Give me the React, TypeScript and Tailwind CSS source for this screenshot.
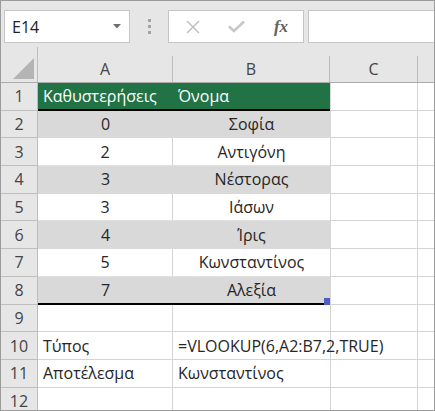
import React from 'react';

const font = { fontFamily: '"Open Sans", "Noto Sans", sans-serif' };

type Row = {
  n: number;
  a?: string;
  b?: string;
  kind: 'head' | 'gray' | 'white' | 'plain';
};

const rows: Row[] = [
  { n: 1, a: 'Καθυστερήσεις', b: 'Όνομα', kind: 'head' },
  { n: 2, a: '0', b: 'Σοφία', kind: 'gray' },
  { n: 3, a: '2', b: 'Αντιγόνη', kind: 'white' },
  { n: 4, a: '3', b: 'Νέστορας', kind: 'gray' },
  { n: 5, a: '3', b: 'Ιάσων', kind: 'white' },
  { n: 6, a: '4', b: 'Ίρις', kind: 'gray' },
  { n: 7, a: '5', b: 'Κωνσταντίνος', kind: 'white' },
  { n: 8, a: '7', b: 'Αλεξία', kind: 'gray' },
  { n: 9, kind: 'plain' },
  { n: 10, a: 'Τύπος', b: '=VLOOKUP(6,A2:B7,2,TRUE)', kind: 'plain' },
  { n: 11, a: 'Αποτέλεσμα', b: 'Κωνσταντίνος', kind: 'plain' },
  { n: 12, kind: 'plain' },
];

function DataRow({ r }: { r: Row }) {
  const rowH = 'h-[27.7px] shrink-0';
  let ab: React.ReactNode;
  if (r.kind === 'head') {
    ab = (
      <div className="flex w-[292px] bg-[#217346] text-white border-b-2 border-black">
        <div className="w-[135px] pl-[5px] flex items-center whitespace-nowrap">{r.a}</div>
        <div className="w-[157px] pl-[5px] flex items-center">{r.b}</div>
      </div>
    );
  } else if (r.kind === 'gray') {
    ab = (
      <div
        className={
          'relative flex w-[292px] bg-[#d9d9d9] text-[#262626] ' +
          (r.n === 8 ? 'border-b-2 border-black' : 'border-b border-[#d9d9d9]')
        }
      >
        <div className="w-[135px] flex items-center justify-center">{r.a}</div>
        <div className="w-[157px] flex items-center justify-center">{r.b}</div>
        {r.n === 8 && (
          <div className="absolute right-0 -bottom-[2px] w-[6px] h-[7px] bg-[#4a5ec3]" />
        )}
      </div>
    );
  } else if (r.kind === 'white') {
    ab = (
      <div className="flex w-[292px] bg-white text-[#262626] border-b border-[#e1e1e1]">
        <div className="w-[135px] flex items-center justify-center border-r border-[#d4d4d4]">{r.a}</div>
        <div className="w-[157px] flex items-center justify-center">{r.b}</div>
      </div>
    );
  } else {
    ab = (
      <div className="flex w-[292px] bg-white text-[#262626]">
        <div className="w-[135px] pl-[5px] flex items-center border-r border-b border-[#d4d4d4] whitespace-nowrap">
          {r.a}
        </div>
        <div className="w-[157px] pl-[5px] flex items-center border-b border-[#d4d4d4] whitespace-nowrap">
          <span className="relative z-10">{r.b}</span>
        </div>
      </div>
    );
  }
  return (
    <div className={'flex ' + rowH}>
      <div className="w-[37px] shrink-0 bg-[#e6e6e6] border-r border-b border-[#bdbdbd] flex items-center justify-center text-[#444]">
        {r.n}
      </div>
      {ab}
      <div className="w-[88px] shrink-0 bg-white border-l border-r border-b border-[#d4d4d4]" />
      <div className="flex-1 bg-white border-b border-[#d4d4d4]" />
    </div>
  );
}

export default function App() {
  return (
    <div
      className="w-[435px] h-[411px] bg-[#e6e6e6] border border-[#9b9b9b] overflow-hidden flex flex-col text-[16px] leading-none"
      style={font}
    >
      {/* formula bar */}
      <div className="flex items-start pt-[9px] pl-[3px] h-[55px] shrink-0">
        <div className="w-[126px] h-[33px] bg-white border border-[#c6c6c6] flex items-center justify-between pl-[7px] pr-[8px] text-[#222]">
          <span className="text-[16px]">E14</span>
          <svg width="8" height="5" viewBox="0 0 8 5">
            <path d="M0 0 L8 0 L4 4.5 Z" fill="#6e6e6e" />
          </svg>
        </div>
        <div className="w-[38px] h-[33px] flex flex-col items-center justify-center gap-[3px]">
          <div className="w-[3px] h-[3px] bg-[#a3a3a3]" />
          <div className="w-[3px] h-[3px] bg-[#a3a3a3]" />
          <div className="w-[3px] h-[3px] bg-[#a3a3a3]" />
        </div>
        <div className="w-[136px] h-[33px] bg-white border border-[#c6c6c6] flex items-center">
          <div className="w-[45px] flex justify-center pl-[2px]">
            <svg width="14" height="14" viewBox="0 0 14 14">
              <path d="M1 1 L13 13 M13 1 L1 13" stroke="#c2c2c2" strokeWidth="1.6" />
            </svg>
          </div>
          <div className="w-[45px] flex justify-center">
            <svg width="17" height="13" viewBox="0 0 17 13">
              <path d="M1 6.5 L6 11 L16 1.5" stroke="#c8c8c8" strokeWidth="2.6" fill="none" />
            </svg>
          </div>
          <div
            className="w-[44px] flex justify-center text-[#5f5f5f] italic text-[17px] font-bold"
            style={{ fontFamily: '"Liberation Serif", "DejaVu Serif", serif' }}
          >
            fx
          </div>
        </div>
        <div className="flex-1 h-[33px] ml-[4px] bg-white border border-[#c6c6c6] border-r-0" />
      </div>

      {/* column headers */}
      <div className="flex h-[27px] shrink-0 border-b border-[#ababab] text-[#444]">
        <div className="w-[37px] shrink-0 border-r border-[#bdbdbd] -mt-[9px] flex items-end justify-end pr-[3px] pb-[3px]">
          <svg width="21" height="21" viewBox="0 0 21 21">
            <path d="M21 0 L21 21 L0 21 Z" fill="#b4b4b4" />
          </svg>
        </div>
        <div className="w-[135px] shrink-0 border-r border-[#bdbdbd] flex items-center justify-center">A</div>
        <div className="w-[157px] shrink-0 border-r border-[#bdbdbd] flex items-center justify-center">B</div>
        <div className="w-[88px] shrink-0 border-r border-[#bdbdbd] flex items-center justify-center">C</div>
        <div className="flex-1" />
      </div>

      {/* rows */}
      <div className="flex flex-col">
        {rows.map((r) => (
          <DataRow key={r.n} r={r} />
        ))}
      </div>
    </div>
  );
}
